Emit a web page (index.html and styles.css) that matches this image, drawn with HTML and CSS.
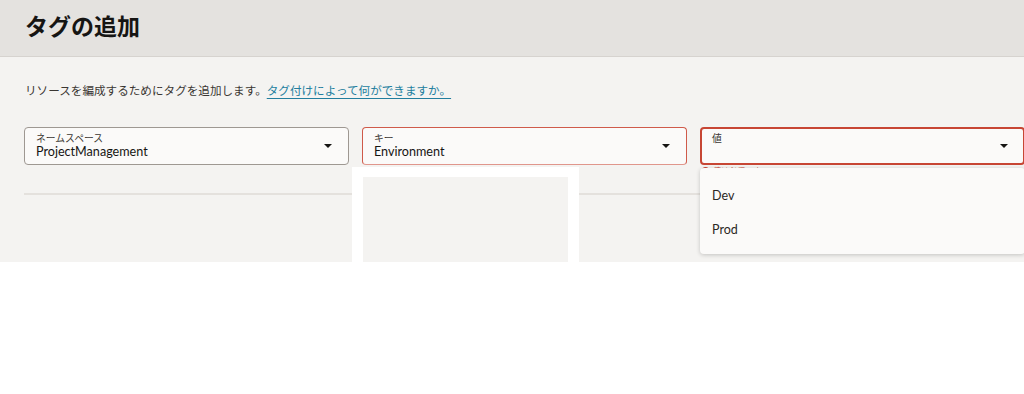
FILE: index.html
```html
<!DOCTYPE html>
<html lang="ja">
<head>
    <meta charset="UTF-8">
    <meta name="viewport" content="width=device-width, initial-scale=1.0">
    <title>タグの追加</title>
    <link rel="stylesheet" href="styles.css">
</head>
<body>

<div class="panel">
    <header class="panel-header">
        <h1>タグの追加</h1>
    </header>

    <div class="panel-body">
        <p class="intro">リソースを編成するためにタグを追加します。<a href="#">タグ付けによって何ができますか。</a></p>

        <div class="tag-row">
            <div class="field">
                <div class="field-box">
                    <div class="field-text">
                        <span class="field-label">ネームスペース</span>
                        <span class="field-value">ProjectManagement</span>
                    </div>
                    <span class="caret"></span>
                </div>
            </div>
            <div class="field">
                <div class="field-box warn">
                    <div class="field-text">
                        <span class="field-label">キー</span>
                        <span class="field-value">Environment</span>
                    </div>
                    <span class="caret"></span>
                </div>
                <div class="key-popup"><div class="key-popup-inner"></div></div>
            </div>
            <div class="field">
                <div class="field-box error">
                    <div class="field-text">
                        <span class="field-label">値</span>
                        <span class="field-value">&nbsp;</span>
                    </div>
                    <span class="caret"></span>
                </div>
                <div class="field-msg"><span class="err-dot"></span>値は必須です</div>
                <ul class="listbox">
                    <li>Dev</li>
                    <li>Prod</li>
                </ul>
            </div>
        </div>

        <hr class="divider">
    </div>
</div>

</body>
</html>
```

FILE: styles.css
```css
body {
    margin: 0;
    font-family: Lato, "Noto Sans CJK JP", sans-serif;
    color: #161513;
    background: #fff;
}
.panel {
    background-color: #f4f3f1;
    height: 262px;
}
.panel-header {
    background-color: #e4e2df;
    height: 56px;
    border-bottom: 1px solid #d6d3cf;
    padding: 0 25px;
    display: flex;
    align-items: center;
}
.panel-header h1 {
    margin: 0;
    font-size: 23px;
    font-weight: 700;
    position: relative;
    top: -3px;
}
.panel-body {
    padding: 24px 0 0 24px;
}
.intro {
    margin: 0 0 26px 1px;
    font-size: 11.6px;
    line-height: 20px;
    color: #3a3632;
}
.intro a {
    color: #227e9e;
    text-decoration: underline;
    text-underline-offset: 3px;
}
.tag-row {
    display: grid;
    grid-template-columns: 325px 325px 325px;
    column-gap: 13px;
}
.field {
    position: relative;
}
.field-box {
    height: 38px;
    box-sizing: border-box;
    background-color: #fbfaf9;
    border: 1px solid #9e9892;
    border-radius: 4px;
    display: flex;
    align-items: center;
    padding: 0 16px 0 11px;
}
.field-box.warn {
    border-color: #cf5a4a;
    border-bottom-color: #e0968c;
}
.field-box.error {
    border: 2px solid #c74634;
    padding-left: 10px;
    padding-right: 15px;
}
.field-text {
    flex: 1;
    display: flex;
    flex-direction: column;
}
.field-label {
    font-size: 9.8px;
    line-height: 12px;
    color: #3a3632;
}
.field-value {
    font-size: 12.6px;
    line-height: 16px;
}
.caret {
    width: 0;
    height: 0;
    border-left: 4px solid transparent;
    border-right: 4px solid transparent;
    border-top: 4px solid #161513;
}
.field-msg {
    position: absolute;
    top: 38px;
    left: 2px;
    font-size: 8px;
    color: #c74634;
    display: flex;
    align-items: center;
    gap: 4px;
}
.err-dot {
    width: 7px;
    height: 7px;
    border-radius: 50%;
    background-color: #c74634;
}
.key-popup {
    position: absolute;
    left: -10px;
    top: 40px;
    width: 227px;
    height: 95px;
    background-color: #fff;
    padding: 10px 11px 0;
    box-sizing: border-box;
    z-index: 2;
}
.key-popup-inner {
    height: 100%;
    background-color: #f4f3f1;
}
.listbox {
    position: absolute;
    left: 0;
    top: 41px;
    width: 325px;
    margin: 0;
    padding: 11px 0 7px;
    list-style: none;
    background-color: #fbfaf9;
    border-radius: 4px;
    box-shadow: 0 1px 4px rgba(0, 0, 0, 0.2);
    z-index: 3;
}
.listbox li {
    font-size: 12.5px;
    line-height: 34px;
    padding-left: 12px;
    color: #2b2825;
}
.divider {
    margin: 28px 0 0;
    border: none;
    border-top: 2px solid #e4e1dd;
}
```
